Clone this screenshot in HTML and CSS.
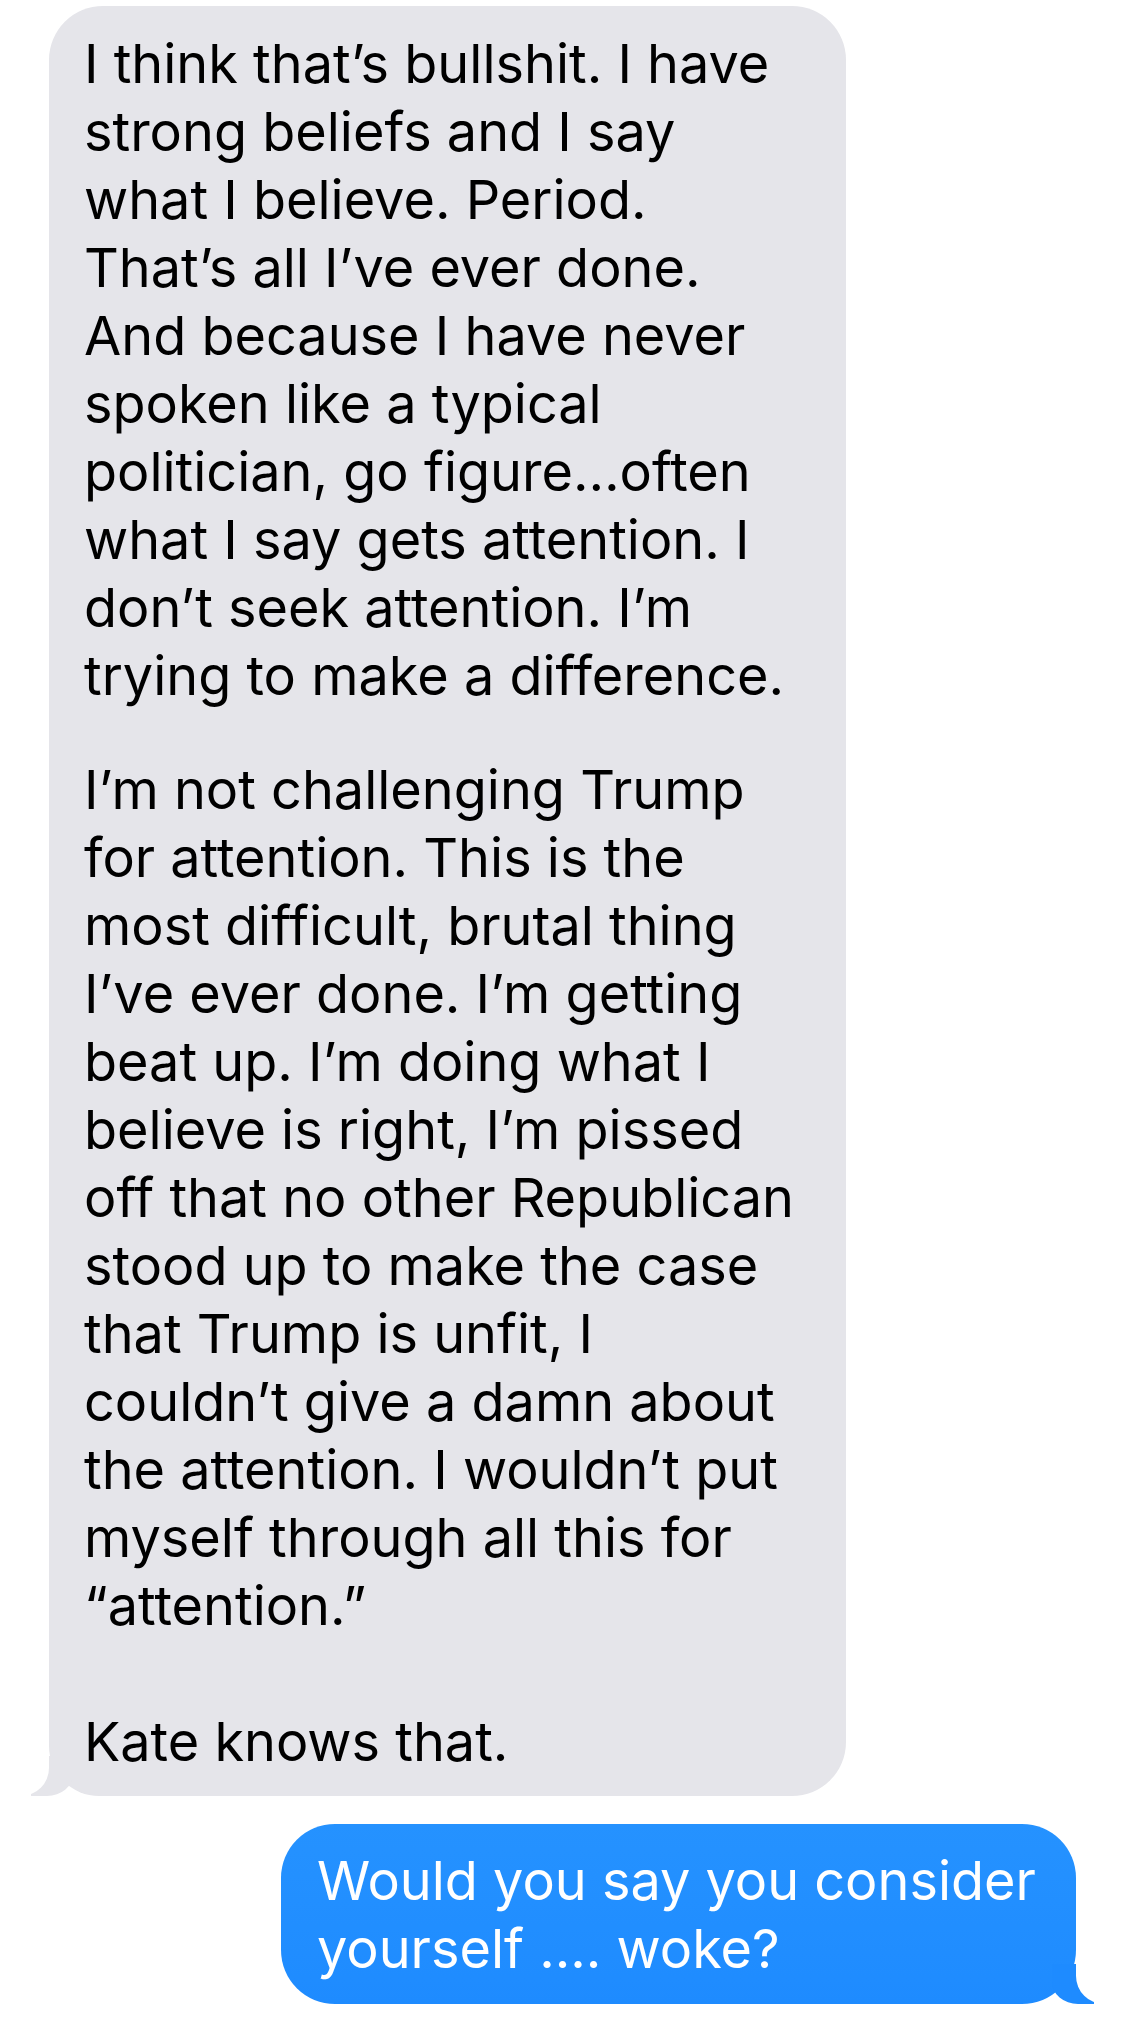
FILE: index.html
```
<!DOCTYPE html>
<html lang="en">
<head>
  <meta charset="UTF-8">
  <meta name="viewport" content="width=device-width, initial-scale=1.0">
  <title>Messages</title>
  <link rel="stylesheet" href="styles.css">
</head>
<body>

<div class="thread">
  <div class="bubble them first">
    I think that’s bullshit. I have<br>
    strong beliefs and I say<br>
    what I believe. Period.<br>
    That’s all I’ve ever done.<br>
    And because I have never<br>
    spoken like a typical<br>
    politician, go figure…often<br>
    what I say gets attention. I<br>
    don’t seek attention. I’m<br>
    trying to make a difference.
  </div>
  <div class="bubble them last">
    I’m not challenging Trump<br>
    for attention. This is the<br>
    most difficult, brutal thing<br>
    I’ve ever done. I’m getting<br>
    beat up. I’m doing what I<br>
    believe is right, I’m pissed<br>
    off that no other Republican<br>
    stood up to make the case<br>
    that Trump is unfit, I<br>
    couldn’t give a damn about<br>
    the attention. I wouldn’t put<br>
    myself through all this for<br>
    “attention.”<br>
    <br>
    Kate knows that.
  </div>
  <div class="bubble me">
    Would you say you consider<br>
    yourself .... woke?
  </div>
</div>

</body>
</html>
```

FILE: styles.css
```
body {
  margin: 0;
  background: #fff;
  font-family: Inter, "Liberation Sans", sans-serif;
}
.thread {
  display: flex;
  flex-direction: column;
  padding: 6px 49px 23px;
}
.bubble {
  position: relative;
  box-sizing: border-box;
  font-size: 54px;
  line-height: 68px;
  white-space: nowrap;
  padding-left: 35px;
}
.them {
  width: 797px;
  background: #e5e5ea;
  color: #000;
}
.them.first {
  border-radius: 54px 54px 0 0;
  padding-top: 24px;
  padding-bottom: 33px;
}
.them.last {
  border-radius: 0 0 54px 50px;
  padding-top: 13px;
  padding-bottom: 20px;
}
.me {
  align-self: flex-end;
  width: 795px;
  margin-top: 28px;
  padding-top: 23px;
  padding-bottom: 21px;
  padding-left: 36px;
  border-radius: 54px;
  color: #fff;
  background: linear-gradient(#2592ff, #1e8bff);
}

/* tails */
.them.last::before,
.them.last::after,
.me::before,
.me::after {
  content: "";
  position: absolute;
  bottom: 0;
  height: 40px;
}
.them.last::before {
  left: -18px;
  width: 42px;
  background: #e5e5ea;
  border-bottom-right-radius: 26px 22px;
}
.them.last::after {
  left: -50px;
  width: 50px;
  background: #fff;
  border-bottom-right-radius: 28px;
}
.me::before {
  right: -18px;
  width: 42px;
  background: #1e8bff;
  border-bottom-left-radius: 26px 22px;
}
.me::after {
  right: -50px;
  width: 50px;
  background: #fff;
  border-bottom-left-radius: 28px;
}
```
